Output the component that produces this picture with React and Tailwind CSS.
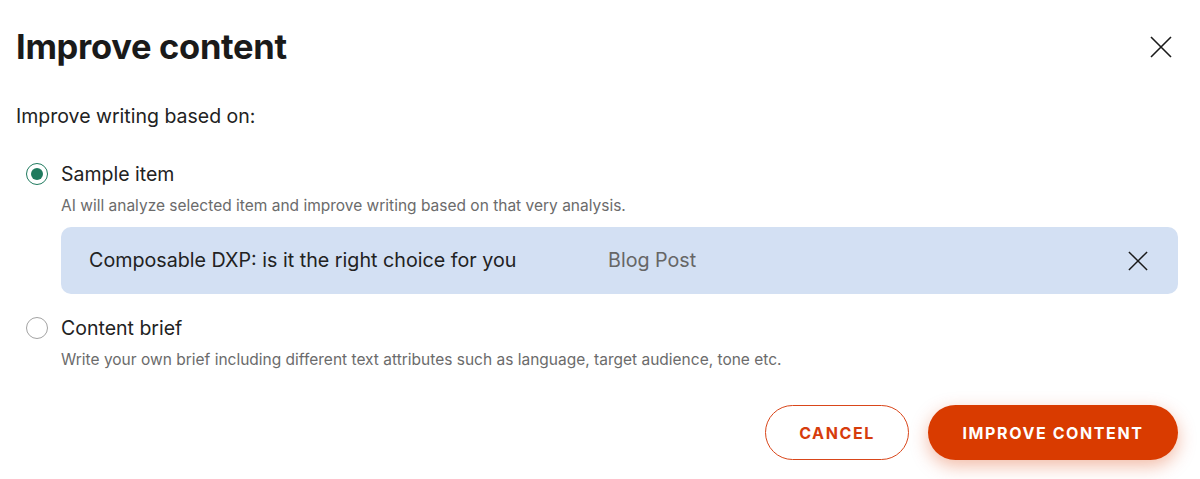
import { useState } from 'react';

const font = { fontFamily: 'Inter, "Noto Sans", sans-serif' };

function CloseIcon({ className }) {
    return (
        <svg viewBox="0 0 22 22" className={className} fill="none" stroke="currentColor" strokeWidth="1.6" overflow="visible">
            <path d="M1 1L21 21M21 1L1 21" />
        </svg>
    );
}

function Radio({ checked }) {
    return (
        <span
            className={
                checked
                    ? 'w-[22px] h-[22px] rounded-full border-[1.5px] border-[#1f7a5e] flex items-center justify-center shrink-0'
                    : 'w-[22px] h-[22px] rounded-full border-[1.5px] border-[#a3a3a3] flex items-center justify-center shrink-0'
            }
        >
            {checked && <span className="w-[12px] h-[12px] rounded-full bg-[#1f7a5e]" />}
        </span>
    );
}

export default function App() {
    const [choice, setChoice] = useState('sample');

    return (
        <div className="w-[1200px] h-[479px] bg-white text-[#1c1c1c] px-4 pt-[25px]" style={font}>
            <div className="flex items-center justify-between h-[44px]">
                <h1 className="text-[34.5px] leading-[44px] font-bold tracking-[-0.3px] text-[#1a1a1a]">Improve content</h1>
                <button className="text-[#1a1a1a] mr-[12px]">
                    <CloseIcon className="w-[22px] h-[22px]" />
                </button>
            </div>

            <p className="mt-[33px] text-[19.5px] leading-[28px] text-[#222]">Improve writing based on:</p>

            <div className="mt-[30px] pl-[10px] pr-[6px]">
                <button className="h-[28px] flex items-center gap-[13px]" onClick={() => setChoice('sample')}>
                    <Radio checked={choice === 'sample'} />
                    <span className="text-[19.5px] leading-[28px] text-[#222]">Sample item</span>
                </button>
                <p className="ml-[35px] mt-[8px] text-[15.5px] leading-[20px] text-[#6b6b6b]">
                    AI will analyze selected item and improve writing based on that very analysis.
                </p>

                <div className="ml-[35px] mt-[11px] h-[67px] rounded-[10px] bg-[#d3e0f3] flex items-center pl-[28px] pr-[30px]">
                    <span className="w-[519px] text-[19.7px] text-[#222]">Composable DXP: is it the right choice for you</span>
                    <span className="text-[19.7px] text-[#666]">Blog Post</span>
                    <button className="ml-auto text-[#1a1a1a]">
                        <CloseIcon className="w-[20px] h-[20px]" />
                    </button>
                </div>

                <button className="mt-[20px] h-[28px] flex items-center gap-[13px]" onClick={() => setChoice('brief')}>
                    <Radio checked={choice === 'brief'} />
                    <span className="text-[19.5px] leading-[28px] text-[#222]">Content brief</span>
                </button>
                <p className="ml-[35px] mt-[8px] text-[15.5px] leading-[20px] text-[#6b6b6b]">
                    Write your own brief including different text attributes such as language, target audience, tone etc.
                </p>
            </div>

            <div className="mt-[35px] flex justify-end gap-[19px] pr-[6px]">
                <button className="h-[55px] w-[144px] rounded-full border-[1.5px] border-[#d9461a] text-[#d63c0c] text-[16px] font-bold tracking-[1.6px] bg-white">
                    CANCEL
                </button>
                <button className="h-[55px] w-[250px] rounded-full bg-[#d93b00] text-white text-[16px] font-bold tracking-[1.6px] shadow-[0_6px_18px_rgba(217,59,0,0.35)]">
                    IMPROVE CONTENT
                </button>
            </div>
        </div>
    );
}
